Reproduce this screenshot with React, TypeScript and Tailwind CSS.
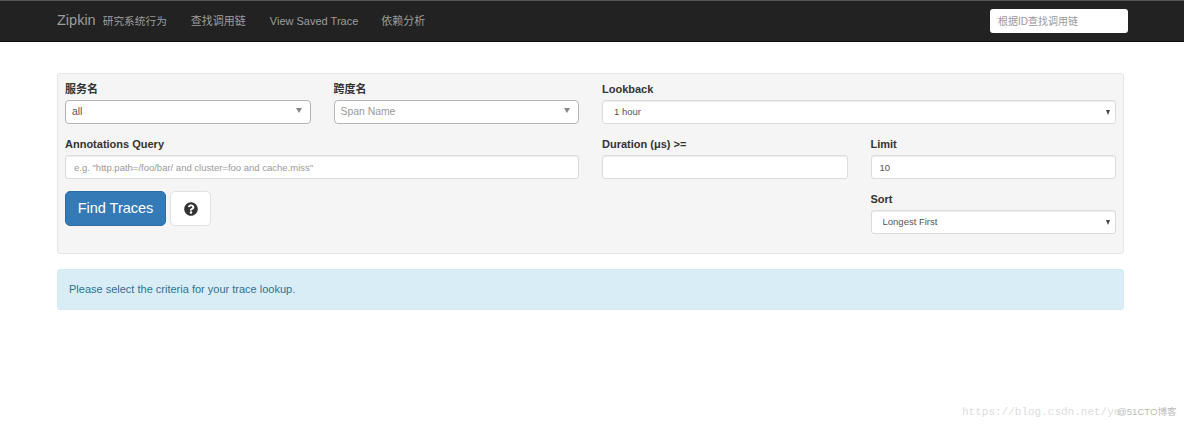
import { FaQuestionCircle } from "react-icons/fa";

const font = "font-['Liberation_Sans','Noto_Sans_CJK_SC',sans-serif]";
const inputBase =
  "block h-6 w-full rounded-[3px] border border-[#dcdcdc] bg-white text-[9.5px] text-[#555] shadow-[inset_0_1px_1px_rgba(0,0,0,0.075)] outline-none placeholder:text-[#999]";

function Field({ label, className, children }: { label: string; className?: string; children: React.ReactNode }) {
  return (
    <div className={className}>
      <label className="mb-1 block h-[13px] text-[11px] leading-[13px] font-bold text-[#333]">{label}</label>
      {children}
    </div>
  );
}

function Combo({ value, placeholder }: { value?: string; placeholder?: string }) {
  return (
    <div className="relative flex h-6 items-center rounded-[4px] border border-[#b4b4b4] bg-white pl-[6px] text-[10.4px] text-[#555]">
      <span className={placeholder ? "text-[#999]" : ""}>{value || placeholder}</span>
      <span className="absolute top-[7px] right-[8px] h-0 w-0 border-x-[3px] border-t-[5px] border-x-transparent border-t-[#888]" />
    </div>
  );
}

function Select({ value }: { value: string }) {
  return (
    <div className="relative">
      <select defaultValue={value} className={`${inputBase} appearance-none pl-[11px]`}>
        <option>{value}</option>
      </select>
      <span className="absolute top-[10px] right-[6px] h-0 w-0 border-x-[2.5px] border-t-[5px] border-x-transparent border-t-[#444]" />
    </div>
  );
}

export default function App() {
  return (
    <div className={`${font} relative h-[424px] w-[1184px] overflow-hidden bg-white`}>
      <nav className="flex h-[42px] items-center border-t border-b border-t-[#555] border-b-[#111] bg-[#222] pr-[56px] pl-[57px] text-[#9d9d9d]">
        <span className="text-[14.5px]">Zipkin</span>
        <span className="ml-[7px] text-[10.7px]">研究系统行为</span>
        <a className="ml-[24px] text-[11px]">查找调用链</a>
        <a className="ml-[24px] text-[11px]">View Saved Trace</a>
        <a className="ml-[23px] text-[11px]">依赖分析</a>
        <input
          placeholder="根据ID查找调用链"
          className="ml-auto h-6 w-[138px] rounded-[3px] bg-white pl-2 text-[10px] outline-none placeholder:text-[#999]"
        />
      </nav>

      <main className="mt-[31px] mr-[60px] ml-[57px]">
        <section className="h-[181px] rounded-[3px] border border-[#e6e6e6] bg-[#f5f5f5] px-[7px] pt-[9px]">
          <div className="grid grid-cols-4 gap-x-[23px] gap-y-[14px]">
            <Field label="服务名">
              <Combo value="all" />
            </Field>
            <Field label="跨度名">
              <Combo placeholder="Span Name" />
            </Field>
            <Field label="Lookback" className="col-span-2">
              <Select value="1 hour" />
            </Field>

            <Field label="Annotations Query" className="col-span-2">
              <input
                className={`${inputBase} pl-2`}
                placeholder={'e.g. "http.path=/foo/bar/ and cluster=foo and cache.miss"'}
              />
            </Field>
            <Field label="Duration (μs) >=">
              <input className={`${inputBase} pl-2`} />
            </Field>
            <Field label="Limit">
              <input className={`${inputBase} pl-2`} defaultValue="10" />
            </Field>

            <div className="col-span-3 -mt-[2px] flex items-start gap-1">
              <button className="h-[35px] w-[101px] rounded-[5px] border border-[#2e6da4] bg-[#337ab7] text-[14.5px] text-white">
                Find Traces
              </button>
              <button className="flex h-[35px] w-[41px] items-center justify-center rounded-[5px] border border-[#e0e0e0] bg-white text-[#333]">
                <FaQuestionCircle size={14} />
              </button>
            </div>
            <Field label="Sort">
              <Select value="Longest First" />
            </Field>
          </div>
        </section>

        <div className="mt-[15px] flex h-[41px] items-center rounded-[3px] border border-[#d3e9f3] bg-[#d9edf7] pl-[11px] text-[11px] text-[#31708f]">
          Please select the criteria for your trace lookup.
        </div>
      </main>

      <div className="pointer-events-none absolute top-[404px] left-[962px] font-['Liberation_Mono',monospace] text-[11px] text-[#ddd]">
        https://blog.csdn.net/ye
      </div>
      <div className="pointer-events-none absolute top-[405px] left-[1117px] text-[9.6px] text-[#bbb]">@51CTO博客</div>
    </div>
  );
}
